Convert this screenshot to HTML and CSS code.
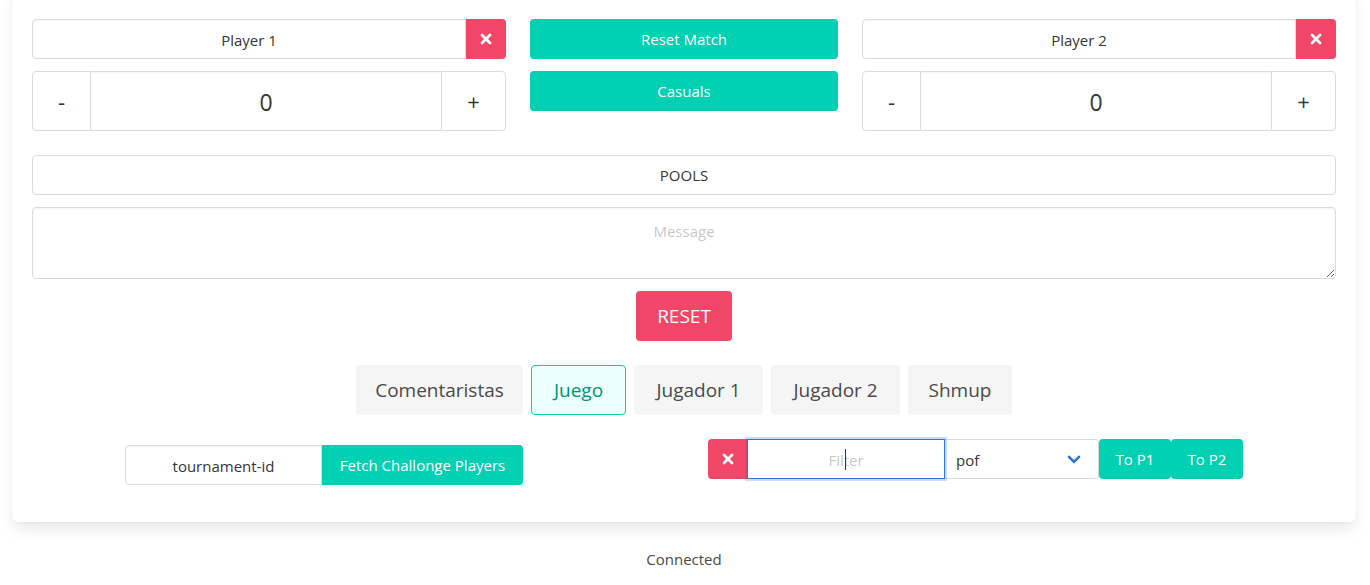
FILE: index.html
```html
<!DOCTYPE html>
<html lang="es">
<head>
<meta charset="utf-8">
<title>Scoreboard</title>
<link rel="stylesheet" href="styles.css">
</head>
<body>
<div class="page">
  <div class="box">
    <div class="top">
      <div class="col">
        <div class="addons">
          <input class="input name" value="Player 1">
          <button class="del del-right" aria-label="clear"><svg width="12" height="12" viewBox="0 0 12 12"><path d="M2 2 L10 10 M10 2 L2 10" stroke="#fff" stroke-width="2.8" stroke-linecap="round"/></svg></button>
        </div>
        <div class="score">
          <button class="step minus">-</button>
          <input class="input score-input" value="0">
          <button class="step plus">+</button>
        </div>
      </div>
      <div class="col">
        <button class="primary">Reset Match</button>
        <button class="primary">Casuals</button>
      </div>
      <div class="col">
        <div class="addons">
          <input class="input name" value="Player 2">
          <button class="del del-right" aria-label="clear"><svg width="12" height="12" viewBox="0 0 12 12"><path d="M2 2 L10 10 M10 2 L2 10" stroke="#fff" stroke-width="2.8" stroke-linecap="round"/></svg></button>
        </div>
        <div class="score">
          <button class="step minus">-</button>
          <input class="input score-input" value="0">
          <button class="step plus">+</button>
        </div>
      </div>
    </div>

    <button class="pools">POOLS</button>
    <textarea class="textarea" placeholder="Message"></textarea>

    <div class="reset-row">
      <button class="reset">RESET</button>
    </div>

    <div class="tabs">
      <button class="tab w-com">Comentaristas</button>
      <button class="tab active w-jue">Juego</button>
      <button class="tab w-jug">Jugador 1</button>
      <button class="tab w-jug">Jugador 2</button>
      <button class="tab w-shm">Shmup</button>
    </div>

    <div class="bottom">
      <div class="fetch-group">
        <input class="input tid" value="tournament-id">
        <button class="primary fetch">Fetch Challonge Players</button>
      </div>
      <div class="filter-group">
        <button class="del del-left" aria-label="clear"><svg width="12" height="12" viewBox="0 0 12 12"><path d="M2 2 L10 10 M10 2 L2 10" stroke="#fff" stroke-width="2.8" stroke-linecap="round"/></svg></button>
        <div class="filter-wrap">
          <input class="input filter" placeholder="Filter">
          <span class="caret"></span>
        </div>
        <div class="select"><span>pof</span><span class="chev"></span></div>
        <button class="primary top-btn">To P1</button>
        <button class="primary top-btn">To P2</button>
      </div>
    </div>
  </div>
  <p class="status">Connected</p>
</div>
</body>
</html>
```

FILE: styles.css
```css
* { box-sizing: border-box; }

body {
  margin: 0;
  background: #fff;
  color: #4a4a4a;
  font-family: "Open Sans", "Noto Sans", sans-serif;
}

button, input, textarea {
  font-family: inherit;
  margin: 0;
}

.page {
  padding: 0 14px 0 12px;
}

.box {
  margin-top: -6px;
  background: #fff;
  border-radius: 6px;
  box-shadow: 0 8px 16px -2px rgba(10, 10, 10, 0.1), 0 0 0 1px rgba(10, 10, 10, 0.02);
  padding: 25px 20px 37px;
}

.top {
  display: grid;
  grid-template-columns: 474fr 308fr 474fr;
  column-gap: 24px;
}

.col {
  display: flex;
  flex-direction: column;
  gap: 12px;
}

.addons {
  display: flex;
}

.input {
  height: 40px;
  border: 1px solid #dbdbdb;
  border-radius: 4px;
  background: #fff;
  color: #363636;
  font-size: 15px;
  text-align: center;
  padding: 2px 11px 0;
  min-width: 0;
  outline: none;
  box-shadow: inset 0 1px 2px rgba(10, 10, 10, 0.05);
}

.input::placeholder,
.textarea::placeholder {
  color: rgba(54, 54, 54, 0.3);
}

.name {
  flex: 1;
  border-radius: 4px 0 0 4px;
}

.del {
  width: 40px;
  height: 40px;
  flex: none;
  background: #f14668;
  border: 0;
  display: flex;
  align-items: center;
  justify-content: center;
  padding: 0;
}

.del-right { border-radius: 0 4px 4px 0; }
.del-left { width: 39px; border-radius: 4px 0 0 4px; }

.score {
  display: flex;
  height: 60px;
}

.step {
  flex: none;
  height: 60px;
  border: 1px solid #dbdbdb;
  background: #fff;
  color: #363636;
  font-size: 22px;
  padding: 0;
}

.minus {
  width: 59px;
  border-radius: 4px 0 0 4px;
}

.plus {
  width: 65px;
  border-radius: 0 4px 4px 0;
}

.score-input {
  flex: 1;
  height: 60px;
  border-radius: 0;
  border-left: 0;
  border-right: 0;
  font-size: 23px;
}

.primary {
  height: 40px;
  background: #00d1b2;
  color: #fff;
  border: 0;
  border-radius: 4px;
  font-size: 15px;
  padding: 0;
}

.pools {
  display: block;
  width: 100%;
  height: 40px;
  margin-top: 24px;
  border: 1px solid #dbdbdb;
  border-radius: 4px;
  background: #fff;
  color: #363636;
  font-size: 15px;
}

.textarea {
  display: block;
  width: 100%;
  height: 72px;
  margin-top: 12px;
  border: 1px solid #dbdbdb;
  border-radius: 4px;
  box-shadow: inset 0 1px 2px rgba(10, 10, 10, 0.05);
  font-size: 15px;
  line-height: 1.5;
  text-align: center;
  padding: 12px 11px 6px;
  color: #363636;
  resize: vertical;
  outline: none;
}

.reset-row {
  display: flex;
  justify-content: center;
  margin-top: 12px;
}

.reset {
  width: 96px;
  height: 50px;
  background: #f14668;
  color: #fff;
  border: 0;
  border-radius: 4px;
  font-size: 19px;
  padding: 0;
}

.tabs {
  display: flex;
  justify-content: center;
  gap: 8px;
  margin-top: 24px;
}

.tab {
  height: 50px;
  border: 1px solid transparent;
  border-radius: 4px;
  background: #f5f5f5;
  color: #4a4a4a;
  font-size: 19px;
  padding: 0;
}

.tab.active {
  background: #ebfffc;
  border-color: #00d1b2;
  color: #00947e;
}

.w-com { width: 167px; }
.w-jue { width: 95px; }
.w-jug { width: 129px; }
.w-shm { width: 104px; }

.bottom {
  display: flex;
  justify-content: center;
  align-items: flex-start;
  gap: 185px;
  margin-top: 24px;
}

.fetch-group {
  display: flex;
  margin-top: 6px;
}

.tid {
  width: 197px;
  border-radius: 4px 0 0 4px;
}

.fetch {
  width: 201px;
  border-radius: 0 4px 4px 0;
}

.filter-group {
  display: flex;
}

.filter-wrap {
  position: relative;
  z-index: 1;
}

.filter {
  width: 198px;
  border-radius: 0;
  border-color: #3273dc;
  box-shadow: 0 0 0 2px rgba(50, 115, 220, 0.25);
}

.caret {
  position: absolute;
  left: 98px;
  top: 10px;
  width: 1px;
  height: 21px;
  background: #363636;
}

.select {
  position: relative;
  width: 154px;
  height: 40px;
  border: 1px solid #dbdbdb;
  border-left: 0;
  border-radius: 0 4px 4px 0;
  display: flex;
  align-items: center;
  padding: 2px 0 0 11px;
  font-size: 15px;
  color: #363636;
}

.chev {
  position: absolute;
  right: 19px;
  top: 12px;
  width: 10px;
  height: 10px;
  border: 3px solid #3273dc;
  border-top: 0;
  border-right: 0;
  transform: rotate(-45deg);
  border-radius: 1px;
}

.top-btn {
  width: 72px;
}

.status {
  margin: 26px 0 0;
  text-align: center;
  font-size: 15px;
  line-height: 22px;
  color: #4a4a4a;
}
```
